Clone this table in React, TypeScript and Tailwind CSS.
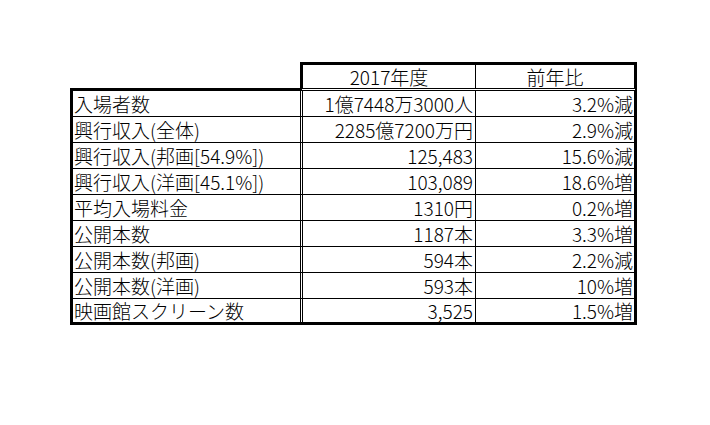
import React from 'react';

const rows: [string, string, string][] = [
  ['入場者数', '1億7448万3000人', '3.2%減'],
  ['興行収入(全体)', '2285億7200万円', '2.9%減'],
  ['興行収入(邦画[54.9%])', '125,483', '15.6%減'],
  ['興行収入(洋画[45.1%])', '103,089', '18.6%増'],
  ['平均入場料金', '1310円', '0.2%増'],
  ['公開本数', '1187本', '3.3%増'],
  ['公開本数(邦画)', '594本', '2.2%減'],
  ['公開本数(洋画)', '593本', '10%増'],
  ['映画館スクリーン数', '3,525', '1.5%増'],
];

export default function App() {
  return (
    <div
      className="w-[710px] h-[425px] bg-white text-black pt-[62px] pl-[70px] text-[19px] font-light leading-none"
      style={{ fontFamily: '"Noto Sans CJK JP", "Noto Sans", sans-serif' }}
    >
      <div className="flex">
        <div className="w-[230px] h-[3px] bg-black self-end" />
        <div className="w-[337px] h-[29px] flex border-t-[3px] border-l-[3px] border-r-[3px] border-black border-b-[3px] [border-bottom-style:double]">
          <div className="w-[173px] border-r border-black flex items-center justify-center">
            2017年度
          </div>
          <div className="flex-1 flex items-center justify-center">前年比</div>
        </div>
      </div>
      <div className="w-[567px] border-l-[3px] border-r-[3px] border-b-[3px] border-black">
        {rows.map(([label, value, change], i) => (
          <div
            key={label}
            className={
              i < rows.length - 1
                ? 'flex h-[26px] border-b border-black'
                : 'flex h-[23px]'
            }
          >
            <div className="w-[230px] border-r-[3px] border-black [border-right-style:double] flex items-center pl-[1px] whitespace-nowrap">
              {label}
            </div>
            <div className="w-[173px] border-r border-black flex items-center justify-end pr-[2px] whitespace-nowrap">
              {value}
            </div>
            <div className="flex-1 flex items-center justify-end pr-[1px] whitespace-nowrap">
              {change}
            </div>
          </div>
        ))}
      </div>
    </div>
  );
}
